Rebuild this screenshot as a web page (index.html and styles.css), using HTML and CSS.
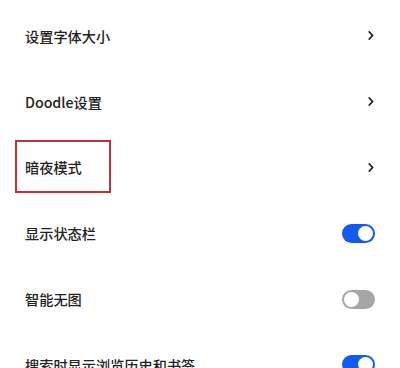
FILE: index.html
```html
<!DOCTYPE html>
<html lang="zh-CN">
<head>
    <meta charset="UTF-8">
    <meta name="viewport" content="width=device-width, initial-scale=1.0">
    <title>设置</title>
    <link rel="stylesheet" href="styles.css">
</head>
<body>
    <div class="settings-list">
        <div class="setting-row">
            <span class="setting-label">设置字体大小</span>
            <svg class="chevron" width="6" height="9" viewBox="0 0 6 9"><path d="M1.3 1 L4.6 4.5 L1.3 8" fill="none" stroke="#1a1a1a" stroke-width="1.8" stroke-linecap="round" stroke-linejoin="round"/></svg>
        </div>
        <div class="setting-row">
            <span class="setting-label">Doodle设置</span>
            <svg class="chevron" width="6" height="9" viewBox="0 0 6 9"><path d="M1.3 1 L4.6 4.5 L1.3 8" fill="none" stroke="#1a1a1a" stroke-width="1.8" stroke-linecap="round" stroke-linejoin="round"/></svg>
        </div>
        <div class="setting-row highlighted">
            <span class="setting-label">暗夜模式</span>
            <svg class="chevron" width="6" height="9" viewBox="0 0 6 9"><path d="M1.3 1 L4.6 4.5 L1.3 8" fill="none" stroke="#1a1a1a" stroke-width="1.8" stroke-linecap="round" stroke-linejoin="round"/></svg>
            <div class="mark-box"></div>
        </div>
        <div class="setting-row">
            <span class="setting-label">显示状态栏</span>
            <div class="switch on"><div class="knob"></div></div>
        </div>
        <div class="setting-row">
            <span class="setting-label">智能无图</span>
            <div class="switch"><div class="knob"></div></div>
        </div>
        <div class="setting-row">
            <span class="setting-label">搜索时显示浏览历史和书签</span>
            <div class="switch on"><div class="knob"></div></div>
        </div>
    </div>
</body>
</html>
```

FILE: styles.css
```css
* {
    margin: 0;
    padding: 0;
    box-sizing: border-box;
}

body {
    background: #ffffff;
    font-family: 'Noto Sans CJK SC', 'Noto Sans', sans-serif;
    color: #222222;
    overflow: hidden;
}

.settings-list {
    padding-top: 3px;
}

.setting-row {
    height: 65.8px;
    padding: 0 25px;
    display: flex;
    align-items: center;
    justify-content: space-between;
    position: relative;
}

.setting-label {
    font-size: 14.2px;
    font-weight: 500;
    letter-spacing: 0;
}

.chevron {
    margin-right: 1px;
}

.mark-box {
    position: absolute;
    left: 15px;
    top: 5.5px;
    width: 96px;
    height: 53px;
    border: 2px solid #c2303d;
}

.switch {
    width: 33px;
    height: 19px;
    border-radius: 10px;
    background: #a6a6a6;
    display: flex;
    align-items: center;
    padding: 0 2px;
}

.switch .knob {
    width: 15px;
    height: 15px;
    border-radius: 50%;
    background: #ffffff;
}

.switch.on {
    background: #1459f0;
    justify-content: flex-end;
}
```
